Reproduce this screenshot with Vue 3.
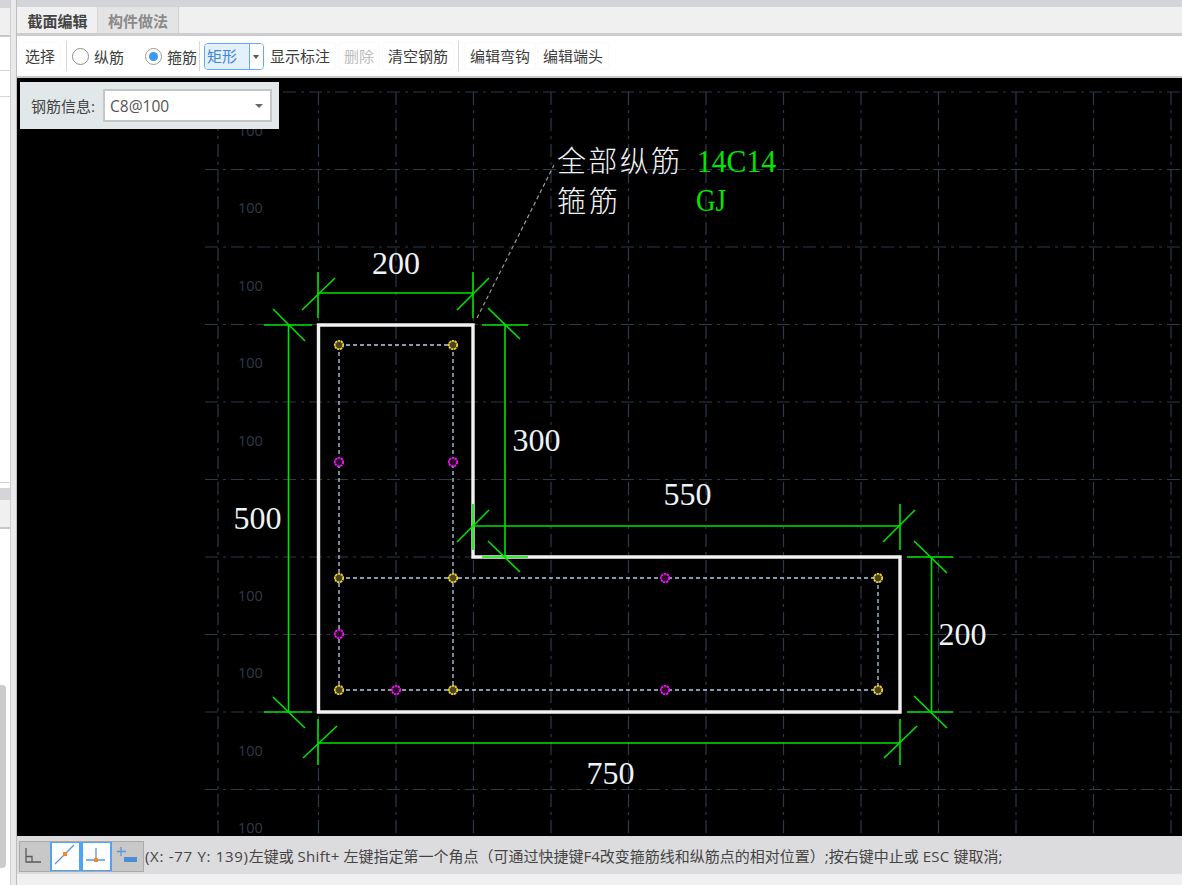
<script setup>
const gridX = [218, 318.5, 396, 473.5, 551, 628.5, 706, 783.5, 861, 938.5, 1016, 1093.5, 1171]
const gridY = [92, 169.5, 247, 324.5, 402, 479.5, 557, 634.5, 712, 789.5]
const labelY = [136, 213, 291, 368, 446, 601, 678, 756, 833]
const greenLines = [
  [318, 293, 473, 293], [318, 272, 318, 318], [473, 272, 473, 318], [302, 310, 335, 278], [457, 310, 489, 278],
  [288.5, 325, 288.5, 712], [264, 325, 312, 325], [264, 712, 312, 712], [273, 309, 305, 341], [273, 697, 305, 728],
  [505, 325, 505, 557], [482, 325, 528, 325], [482, 557, 528, 557], [488, 308, 520, 339], [488, 541, 520, 572],
  [473, 526, 900, 526], [473, 504, 473, 550], [900, 504, 900, 550], [457, 542, 489, 510], [883, 542, 915, 510],
  [931.5, 557, 931.5, 712], [907, 557, 953, 557], [907, 712, 953, 712], [914, 541, 947, 573], [914, 696, 947, 728],
  [318, 743, 900, 743], [318, 719, 318, 765], [900, 719, 900, 765], [303, 758, 337, 726], [884, 758, 917, 726],
]
const stirrups = [
  [339, 345, 453, 345], [339, 345, 339, 690], [453, 345, 453, 690],
  [339, 578, 878, 578], [339, 690, 878, 690], [878, 578, 878, 690],
]
const yellowBars = [[339, 345], [453, 345], [339, 578], [453, 578], [878, 578], [339, 690], [453, 690], [878, 690]]
const magentaBars = [[339, 462], [453, 462], [339, 634], [396, 690], [665, 578], [665, 690]]
const dims = [
  { t: '200', x: 372, y: 274 }, { t: '300', x: 512.5, y: 451 }, { t: '550', x: 663.5, y: 505 },
  { t: '500', x: 233.5, y: 529 }, { t: '200', x: 938.5, y: 645 }, { t: '750', x: 586.5, y: 784 },
]
</script>

<template>
  <div class="app">
    <aside class="side">
      <div class="side-panel">
        <div class="sp-top"></div>
        <div class="sp-tab"></div>
        <div class="sp-blank"></div>
        <div class="sp-row"></div>
        <div class="sp-fill"></div>
        <div class="sp-top second"></div>
        <div class="sp-tab"></div>
        <div class="sp-bottom"><div class="sp-thumb"></div></div>
      </div>
      <div class="side-split"></div>
    </aside>

    <main class="main">
      <div class="topstrip"></div>
      <div class="tabs">
        <div class="tab active">截面编辑</div>
        <div class="tab">构件做法</div>
      </div>
      <div class="toolbar">
        <button class="btn">选择</button>
        <span class="sep first"></span>
        <label class="radio r1"><span class="dot"></span>纵筋</label>
        <label class="radio r2"><span class="dot on"></span>箍筋</label>
        <span class="sep second"></span>
        <div class="combo">
          <span class="combo-text">矩形</span>
          <span class="combo-arrow"></span>
        </div>
        <button class="btn">显示标注</button>
        <button class="btn disabled">删除</button>
        <button class="btn">清空钢筋</button>
        <span class="sep third"></span>
        <button class="btn tight">编辑弯钩</button>
        <button class="btn">编辑端头</button>
      </div>

      <div class="canvas">
        <svg class="drawing" viewBox="17 78 1165 758" width="1165" height="758">
          <g class="grid">
            <line v-for="x in gridX" :key="'x' + x" :x1="x" y1="92" :x2="x" y2="836" />
            <line v-for="y in gridY" :key="'y' + y" x1="205" :y1="y" x2="1182" :y2="y" />
          </g>
          <text v-for="y in labelY" :key="'l' + y" class="grid-label" x="238" :y="y">100</text>

          <line class="leader" x1="477" y1="318" x2="554" y2="165" />

          <polygon class="outline" points="318.5,325 473,325 473,557 900,557 900,712 318.5,712" />

          <g class="stirrup">
            <line v-for="(l, i) in stirrups" :key="'s' + i" :x1="l[0]" :y1="l[1]" :x2="l[2]" :y2="l[3]" />
          </g>
          <g class="green">
            <line v-for="(l, i) in greenLines" :key="'g' + i" :x1="l[0]" :y1="l[1]" :x2="l[2]" :y2="l[3]" />
          </g>
          <circle v-for="(p, i) in yellowBars" :key="'yb' + i" class="bar yellow" :cx="p[0]" :cy="p[1]" r="4.2" />
          <circle v-for="(p, i) in magentaBars" :key="'mb' + i" class="bar magenta" :cx="p[0]" :cy="p[1]" r="4.2" />

          <text v-for="(d, i) in dims" :key="'d' + i" class="dim" :x="d.x" :y="d.y">{{ d.t }}</text>

          <text class="note" x="557" y="172" textLength="123" lengthAdjust="spacing">全部纵筋</text>
          <text class="note" x="557" y="212" textLength="61" lengthAdjust="spacing">箍筋</text>
          <text class="note-green" x="697" y="172" textLength="79" lengthAdjust="spacingAndGlyphs">14C14</text>
          <text class="note-green" x="696" y="211" textLength="30" lengthAdjust="spacingAndGlyphs">GJ</text>
        </svg>

        <div class="info">
          <span class="info-label">钢筋信息:</span>
          <div class="info-select">
            <span>C8@100</span>
            <span class="select-arrow"></span>
          </div>
        </div>
      </div>

      <div class="status">
        <div class="snap">
          <div class="snap-btn">
            <svg width="31" height="30" viewBox="19 841 31 30">
              <path d="M26 848V862H41M26 856.5H32V862" class="ic-gray" />
            </svg>
          </div>
          <div class="snap-btn on">
            <svg width="31" height="30" viewBox="50 841 31 30">
              <path d="M55 864L74 845" class="ic-blue" />
              <rect x="63" y="852" width="4" height="4" class="ic-orange" />
            </svg>
          </div>
          <div class="snap-btn on">
            <svg width="31" height="30" viewBox="81 841 31 30">
              <path d="M96 848V860M86 860H105" class="ic-blue" />
              <rect x="94" y="858" width="4" height="4" class="ic-orange" />
            </svg>
          </div>
          <div class="snap-btn">
            <svg width="31" height="30" viewBox="113 841 31 30">
              <path d="M122 847V856M118 851.5H127" class="ic-blue" />
              <rect x="125" y="857" width="13" height="5" class="ic-fill" />
            </svg>
          </div>
        </div>
        <span class="status-text"><span class="latin-wide">(X: -77 Y: 139)</span>左键或 <span class="latin-mid">Shift+</span> 左键指定第一个角点（可通过快捷键F4改变箍筋线和纵筋点的相对位置）;按右键中止或 <span class="latin-mid">ESC</span> 键取消;</span>
      </div>
      <div class="footer"></div>
    </main>
  </div>
</template>

<style>
html, body { margin: 0; padding: 0; overflow: hidden; }
</style>

<style scoped>
.app {
  display: flex;
  width: 1182px;
  height: 885px;
  overflow: hidden;
  background: #f0f0f0;
  font-family: "Open Sans", "Noto Sans CJK SC", sans-serif;
  font-size: 15px;
  color: #444;
}
.side { display: flex; width: 17px; flex: none; }
.side-panel { width: 10px; display: flex; flex-direction: column; background: #fff; border-right: 1px solid #cfcfcf; box-sizing: content-box; }
.side-split { background: #eaeaea; border-right: 1px solid #bdbdbd; box-sizing: content-box; flex: none; width: 5px; }
.sp-top { height: 8px; background: #d4d5d9; flex: none; }
.sp-top.second { height: 12px; margin-top: 5px; }
.sp-tab { height: 27px; background: #f0f0f0; border-bottom: 2px solid #c8c8c8; flex: none; }
.sp-blank { height: 33px; flex: none; }
.sp-row { height: 25px; border-top: 1px solid #d6d6d6; border-bottom: 1px solid #d6d6d6; flex: none; }
.sp-fill { flex: 1; border-bottom: 1px solid #d0d0d0; background: #fff; }
.sp-bottom { height: 356px; flex: none; background: #fff; padding-top: 156px; box-sizing: border-box; }
.sp-thumb { width: 6px; height: 183px; background: #cbcbcb; border-radius: 0 4px 4px 0; }

.main { flex: 1; display: flex; flex-direction: column; min-width: 0; }
.topstrip { height: 7px; background: #d4d5d9; flex: none; }
.tabs { height: 26px; display: flex; background: #f0f0f0; border-bottom: 3px solid #cdcdd1; flex: none; padding-left: 1px; }
.tab { width: 81px; display: flex; align-items: center; justify-content: center; font-weight: 700; font-size: 15px; color: #8a8a8a; background: #e4e4e4; border-right: 1px solid #cfcfcf; box-sizing: border-box; }
.tab.active { width: 80px; color: #444; background: #f0f0f0; border-right: 1px solid #d8d8d8; }

.toolbar { height: 40px; display: flex; align-items: center; background: #fff; border-bottom: 2px solid #c9c9c9; padding-left: 2px; flex: none; box-sizing: content-box; }
.btn { height: 28px; padding: 0 5px; margin: 0 2px 0 0; border: 1px solid #fafafa; border-radius: 4px; background: #fff; color: #3c3c3c; font: inherit; line-height: 1; white-space: nowrap; }
.btn.disabled { color: #bdbdbd; }
.btn.tight { margin-right: 1px; }
.sep { width: 1px; height: 30px; background: #d8d8d8; flex: none; }
.sep.first { margin: 0 5px 0 3px; }
.sep.second { margin: 0 4px 0 2px; }
.sep.third { margin: 0 5px 0 2px; }
.radio { display: flex; align-items: center; white-space: nowrap; color: #3c3c3c; }
.r1 { margin-right: 21px; }
.dot { width: 17px; height: 17px; margin-right: 5px; border: 1px solid #8e8e8e; border-radius: 50%; background: #fff; box-sizing: border-box; position: relative; }
.dot.on { border-color: #9a9a9a; }
.dot.on::after { content: ""; position: absolute; left: 3px; top: 3px; width: 9px; height: 9px; border-radius: 50%; background: #3f96f3; }
.combo { width: 60px; height: 27px; display: flex; border: 1px solid #64aaee; border-radius: 4px; box-sizing: border-box; flex: none; overflow: hidden; }
.combo-text { flex: 1; background: #e4f0fc; color: #3d86d8; padding-left: 2px; line-height: 25px; }
.combo-arrow { width: 13px; border-left: 1px solid #64aaee; background: #fff; position: relative; }
.combo-arrow::after { content: ""; position: absolute; left: 3px; top: 11px; border: 3.5px solid transparent; border-top: 4px solid #555; border-bottom: 0; }

.canvas { flex: 1; background: #000; position: relative; overflow: hidden; min-height: 0; }
.drawing { display: block; }
.grid line { stroke: #2e3948; stroke-width: 1.2; stroke-dasharray: 13 5 3 5; }
.grid-label { fill: #2f3a49; font-family: "Open Sans", sans-serif; font-size: 14.5px; }
.leader { stroke: #9a9a9a; stroke-width: 1.2; stroke-dasharray: 4 3; }
.outline { fill: none; stroke: #f2f2f2; stroke-width: 3.4; }
.stirrup line { stroke: #b2cee8; stroke-width: 1.3; stroke-dasharray: 4 3; }
.green line { stroke: #00e400; stroke-width: 1.6; }
.bar { stroke-width: 1.8; stroke-dasharray: 2.4 0.6; }
.bar.yellow { stroke: #f0d02c; fill: #4b4422; }
.bar.magenta { stroke: #f414f4; fill: #2a0a2a; }
.dim { fill: #eef3f8; font-family: "Liberation Serif", serif; font-size: 32px; }
.note { fill: #f2f4f6; font-family: "Noto Sans CJK SC", sans-serif; font-size: 29px; font-weight: 300; }
.note-green { fill: #00e800; font-family: "Liberation Serif", serif; font-size: 32px; }

.info { position: absolute; left: 3px; top: 4px; width: 259px; height: 47px; background: #e2e8ea; display: flex; align-items: center; box-sizing: border-box; padding-left: 11px; }
.info-label { font-size: 15px; color: #444; width: 72px; white-space: nowrap; }
.info-select { width: 169px; height: 33px; background: #fff; border: 2px solid #c6c6c6; box-sizing: border-box; display: flex; align-items: center; justify-content: space-between; padding: 0 7px 0 5px; font-size: 15.5px; color: #555; }
.select-arrow { border: 4px solid transparent; border-top: 4px solid #666; border-bottom: 0; }

.status { height: 38px; background: #dcdcde; display: flex; align-items: flex-start; flex: none; padding: 5px 0 0 2px; box-sizing: border-box; }
.snap { display: flex; width: 125px; height: 31px; background: #c8c8c8; outline: 1px solid #aaa; outline-offset: -1px; flex: none; }
.snap-btn { width: 31px; height: 31px; flex: none; box-sizing: border-box; }
.snap-btn svg { display: block; }
.snap-btn.on { background: #fff; outline: 2px solid #4fa3f3; outline-offset: -2px; }
.ic-gray { fill: none; stroke: #5a5a5a; stroke-width: 1.3; }
.ic-blue { fill: none; stroke: #5b97d8; stroke-width: 1.3; }
.ic-orange { fill: #f08a2c; }
.ic-fill { fill: #4a8fd6; }
.status-text { margin-left: 1px; font-size: 15px; line-height: 31px; color: #444; white-space: nowrap; }
.latin-wide { letter-spacing: 0.7px; }
.latin-mid { letter-spacing: 0.3px; }
.footer { height: 11px; background: #f0f0f0; flex: none; }
</style>
